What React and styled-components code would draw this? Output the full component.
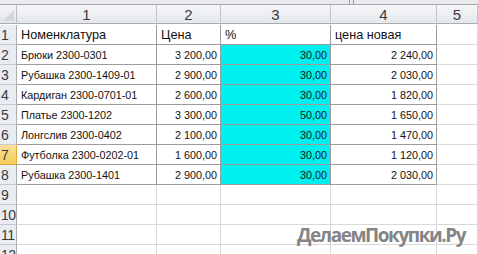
import React from "react";
import styled, { createGlobalStyle } from "styled-components";

const GlobalStyle = createGlobalStyle`
  html, body {
    margin: 0;
    padding: 0;
    background: #ffffff;
  }
  body {
    font-family: "Liberation Sans", Arial, sans-serif;
    overflow: hidden;
  }
`;

const COLS = [140, 64, 110, 106];

const rows = [
  ["Брюки 2300-0301", "3 200,00", "30,00", "2 240,00"],
  ["Рубашка 2300-1409-01", "2 900,00", "30,00", "2 030,00"],
  ["Кардиган 2300-0701-01", "2 600,00", "30,00", "1 820,00"],
  ["Платье 2300-1202", "3 300,00", "50,00", "1 650,00"],
  ["Лонгслив 2300-0402", "2 100,00", "30,00", "1 470,00"],
  ["Футболка 2300-0202-01", "1 600,00", "30,00", "1 120,00"],
  ["Рубашка 2300-1401", "2 900,00", "30,00", "2 030,00"],
];

const Page = styled.div`
  position: relative;
  width: 478px;
  height: 254px;
  overflow: hidden;
  background: #ffffff;
`;

const TopBand = styled.div`
  height: 4px;
  background: #e9ebee;
  border-bottom: 1px solid #a5a8ad;
  position: relative;
`;

const Splitter = styled.div`
  position: absolute;
  left: 349px;
  top: 0;
  width: 3px;
  height: 4px;
  border-left: 1px solid #9a9da2;
  border-right: 1px solid #9a9da2;
`;

const Sheet = styled.div`
  display: grid;
  grid-template-columns: 17px ${COLS.map((c) => `${c}px`).join(" ")} 1fr;
  grid-auto-rows: 20px;
`;

const Corner = styled.div`
  height: 19px;
  background: linear-gradient(#f3f4f6, #e3e6ea);
  border-right: 1px solid #b9bcc1;
  border-bottom: 1px solid #a9acb1;
  box-sizing: border-box;
  position: relative;
  overflow: hidden;
  &::after {
    content: "";
    position: absolute;
    right: 2px;
    bottom: 2px;
    width: 0;
    height: 0;
    border-left: 11px solid transparent;
    border-bottom: 11px solid #d3d6da;
  }
`;

const ColHead = styled.div`
  height: 19px;
  background: linear-gradient(#f6f7f9, #e4e7eb);
  border-right: 1px solid #c3c6cb;
  border-bottom: 1px solid #a9acb1;
  box-sizing: border-box;
  display: flex;
  align-items: center;
  justify-content: center;
  font-size: 15px;
  color: #3b3b3b;
`;

const RowHead = styled.div`
  background: ${(p) =>
    p.$active ? "linear-gradient(#fbe19a, #f6cc56)" : "#e9ecf0"};
  border-right: 1px solid ${(p) => (p.$active ? "#d9a93c" : "#a9acb1")};
  border-bottom: 1px solid ${(p) => (p.$active ? "#d9a93c" : "#c6c9ce")};
  box-sizing: border-box;
  display: flex;
  align-items: center;
  padding: 1px 0 0 1px;
  font-size: 14px;
  color: #3b3b3b;
  letter-spacing: -0.5px;
`;

const Cell = styled.div`
  box-sizing: border-box;
  border-right: 1px solid ${(p) => (p.$data ? "#9c9c9c" : "#d9d9d9")};
  border-bottom: 1px solid ${(p) => (p.$data ? "#9c9c9c" : "#d9d9d9")};
  background: ${(p) => (p.$fill ? "#00f0f0" : "#ffffff")};
  display: flex;
  align-items: center;
  justify-content: ${(p) => (p.$num ? "flex-end" : "flex-start")};
  padding: 1px 3px 0 4px;
  font-size: ${(p) => (p.$title ? "12.7px" : "10.8px")};
  color: #111111;
  white-space: nowrap;
  overflow: hidden;
`;

const Watermark = styled.div`
  position: absolute;
  left: 297px;
  top: 222px;
  font-family: "Open Sans", "Noto Sans", sans-serif;
  font-weight: 700;
  font-size: 19px;
  color: #858585;
  letter-spacing: -1.45px;
  white-space: nowrap;
`;

const App = () => {
  const emptyRows = [9, 10, 11, 12];
  return (
    <Page>
      <GlobalStyle />
      <TopBand>
        <Splitter />
      </TopBand>
      <Sheet>
        <Corner />
        {[1, 2, 3, 4, 5].map((n) => (
          <ColHead key={n}>{n}</ColHead>
        ))}

        <RowHead>1</RowHead>
        <Cell $data $title>Номенклатура</Cell>
        <Cell $data $title>Цена</Cell>
        <Cell $data $title>%</Cell>
        <Cell $data $title>цена новая</Cell>
        <Cell />

        {rows.map((r, i) => (
          <React.Fragment key={i}>
            <RowHead $active={i + 2 === 7}>{i + 2}</RowHead>
            <Cell $data>{r[0]}</Cell>
            <Cell $data $num>{r[1]}</Cell>
            <Cell $data $num $fill>{r[2]}</Cell>
            <Cell $data $num>{r[3]}</Cell>
            <Cell />
          </React.Fragment>
        ))}

        {emptyRows.map((n) => (
          <React.Fragment key={n}>
            <RowHead>{n}</RowHead>
            <Cell />
            <Cell />
            <Cell />
            <Cell />
            <Cell />
          </React.Fragment>
        ))}
      </Sheet>
      <Watermark>ДелаемПокупки.Ру</Watermark>
    </Page>
  );
};

export default App;
